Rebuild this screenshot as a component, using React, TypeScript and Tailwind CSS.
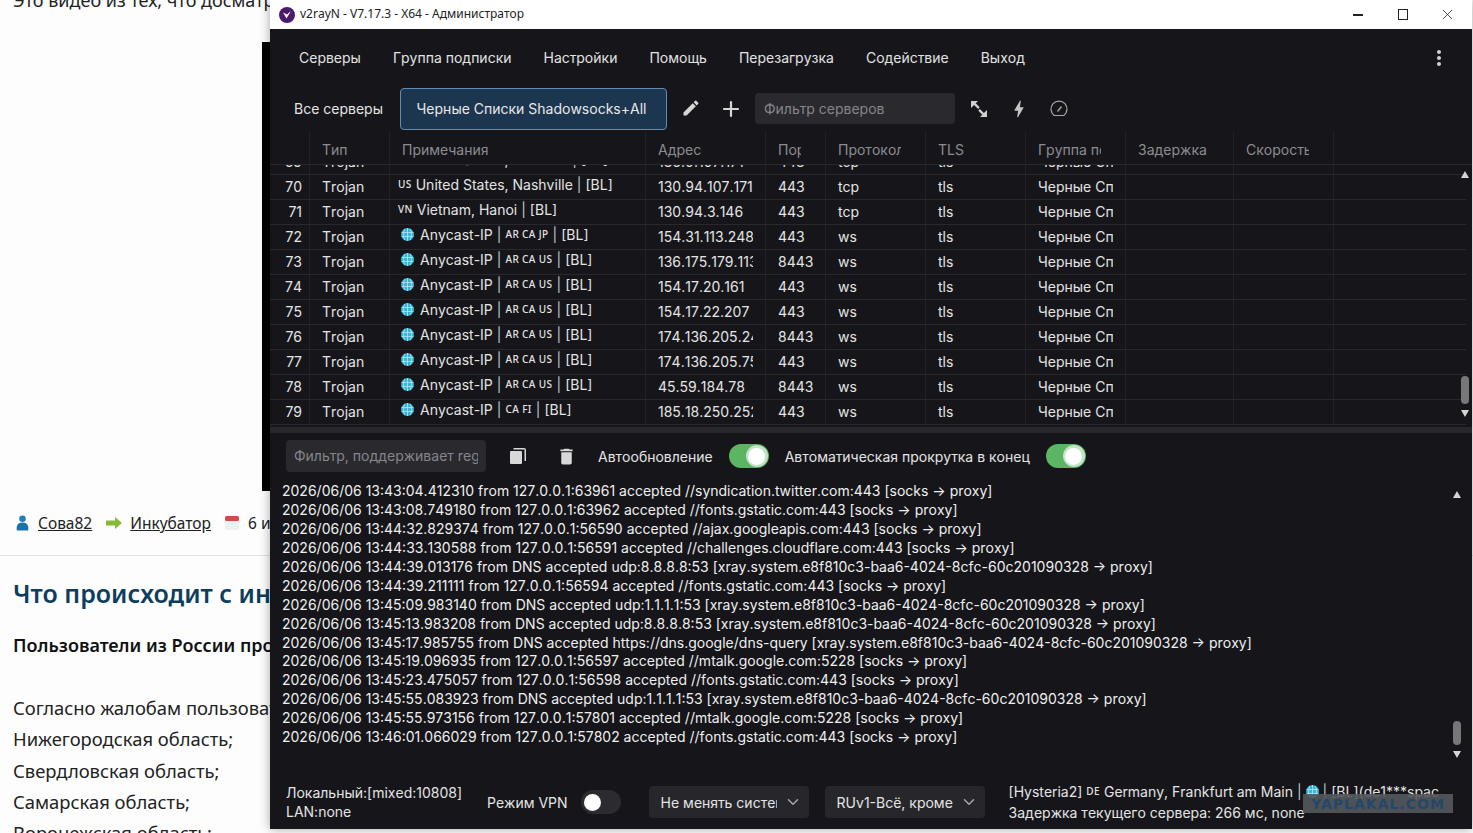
import React from "react";
import { ChevronDown, Plus, X } from "lucide-react";
import { MdBolt, MdDelete, MdEdit, MdMoreVert } from "react-icons/md";

const columns = "grid grid-cols-[40px_80px_256px_120px_60px_100px_100px_100px_108px_100px_1fr]";

const headers = ["", "Тип", "Примечания", "Адрес", "Порт", "Протокол", "TLS", "Группа подписки", "Задержка", "Скорость", ""];

type Row = { id: number; flag?: string; place?: string; tags?: string; address: string; port: string; network: string };

const rows: Row[] = [
  { id: 69, flag: "us", place: "United States, Ashburn", address: "136.0.107.171", port: "443", network: "tcp" },
  { id: 70, flag: "us", place: "United States, Nashville", address: "130.94.107.171", port: "443", network: "tcp" },
  { id: 71, flag: "vn", place: "Vietnam, Hanoi", address: "130.94.3.146", port: "443", network: "tcp" },
  { id: 72, tags: "AR CA JP", address: "154.31.113.248", port: "443", network: "ws" },
  { id: 73, tags: "AR CA US", address: "136.175.179.113", port: "8443", network: "ws" },
  { id: 74, tags: "AR CA US", address: "154.17.20.161", port: "443", network: "ws" },
  { id: 75, tags: "AR CA US", address: "154.17.22.207", port: "443", network: "ws" },
  { id: 76, tags: "AR CA US", address: "174.136.205.24", port: "8443", network: "ws" },
  { id: 77, tags: "AR CA US", address: "174.136.205.75", port: "443", network: "ws" },
  { id: 78, tags: "AR CA US", address: "45.59.184.78", port: "8443", network: "ws" },
  { id: 79, tags: "CA FI", address: "185.18.250.252", port: "443", network: "ws" },
];

const xray = "[xray.system.e8f810c3-baa6-4024-8cfc-60c201090328 → proxy]";

const logs = [
  "2026/06/06 13:43:04.412310 from 127.0.0.1:63961 accepted //syndication.twitter.com:443 [socks → proxy]",
  "2026/06/06 13:43:08.749180 from 127.0.0.1:63962 accepted //fonts.gstatic.com:443 [socks → proxy]",
  "2026/06/06 13:44:32.829374 from 127.0.0.1:56590 accepted //ajax.googleapis.com:443 [socks → proxy]",
  "2026/06/06 13:44:33.130588 from 127.0.0.1:56591 accepted //challenges.cloudflare.com:443 [socks → proxy]",
  `2026/06/06 13:44:39.013176 from DNS accepted udp:8.8.8.8:53 ${xray}`,
  "2026/06/06 13:44:39.211111 from 127.0.0.1:56594 accepted //fonts.gstatic.com:443 [socks → proxy]",
  `2026/06/06 13:45:09.983140 from DNS accepted udp:1.1.1.1:53 ${xray}`,
  `2026/06/06 13:45:13.983208 from DNS accepted udp:8.8.8.8:53 ${xray}`,
  `2026/06/06 13:45:17.985755 from DNS accepted https://dns.google/dns-query ${xray}`,
  "2026/06/06 13:45:19.096935 from 127.0.0.1:56597 accepted //mtalk.google.com:5228 [socks → proxy]",
  "2026/06/06 13:45:23.475057 from 127.0.0.1:56598 accepted //fonts.gstatic.com:443 [socks → proxy]",
  `2026/06/06 13:45:55.083923 from DNS accepted udp:1.1.1.1:53 ${xray}`,
  "2026/06/06 13:45:55.973156 from 127.0.0.1:57801 accepted //mtalk.google.com:5228 [socks → proxy]",
  "2026/06/06 13:46:01.066029 from 127.0.0.1:57802 accepted //fonts.gstatic.com:443 [socks → proxy]",
];

const menu = ["Серверы", "Группа подписки", "Настройки", "Помощь", "Перезагрузка", "Содействие", "Выход"];

const Globe = () => (
  <svg viewBox="0 0 12 12" className="h-[13px] w-[13px] shrink-0">
    <circle cx="6" cy="6" r="6" fill="#35b5d8" />
    <path d="M0.5 4.2h11M0.5 7.8h11M6 0v12M3.4 0.8c-1.4 3-1.4 7.4 0 10.4M8.6 0.8c1.4 3 1.4 7.4 0 10.4" stroke="#bfe9f5" strokeWidth="0.7" fill="none" />
  </svg>
);

const Flag = ({ children }: { children: React.ReactNode }) => (
  <span className="font-['Noto_Sans',sans-serif] text-[10px] font-medium uppercase tracking-[0.4px]">{children}</span>
);

const Bar = () => <span className="text-[#b9cbd8]">|</span>;

const Toggle = ({ on }: { on?: boolean }) =>
  on ? (
    <div className="flex h-6 w-10 shrink-0 items-center justify-end rounded-full bg-[#5cb563] pr-[1px]">
      <div className="flex h-[22px] w-[22px] items-center justify-center rounded-full bg-[#c5e3c7]">
        <div className="h-[17px] w-[17px] rounded-full bg-white" />
      </div>
    </div>
  ) : (
    <div className="flex h-6 w-10 shrink-0 items-center rounded-full bg-[#2c2c30] pl-[3px]">
      <div className="h-[17px] w-[17px] rounded-full bg-white" />
    </div>
  );

const Select = ({ label }: { label: string }) => (
  <div className="flex h-8 w-40 shrink-0 items-center rounded bg-[#27272b] pl-3 pr-[7px]">
    <span className="w-[116px] overflow-hidden whitespace-nowrap">{label}</span>
    <ChevronDown className="ml-auto h-[18px] w-[18px] text-[#a8a8ab]" strokeWidth={2} />
  </div>
);

const Scroller = ({ right, top, thumbTop, thumbHeight, bottom }: { right: string; top: string; thumbTop: string; thumbHeight: string; bottom: string }) => (
  <>
    <div className={`absolute h-0 w-0 border-x-[4px] border-b-[7px] border-x-transparent border-b-[#d5d5d5] ${right} ${top}`} />
    <div className={`absolute w-2 rounded-full bg-[#77777a] ${right} ${thumbTop} ${thumbHeight}`} />
    <div className={`absolute h-0 w-0 border-x-[4px] border-t-[7px] border-x-transparent border-t-[#d5d5d5] ${right} ${bottom}`} />
  </>
);

const ServerRow = ({ row }: { row: Row }) => (
  <div className={`${columns} h-[25px] border-b border-[#29292d] text-[14px] leading-[23px] text-[#e4e4e4]`}>
    <div className="border-r border-[#222226] pr-[7px] text-right">{row.id}</div>
    <div className="border-r border-[#222226] pl-3">Trojan</div>
    <div className="overflow-hidden whitespace-nowrap border-r border-[#222226] pb-[4px] pl-2 leading-[19px]">
      {row.flag ? (
        <span className="flex items-center gap-1">
          <Flag>{row.flag}</Flag> {row.place} <Bar /> [BL]
        </span>
      ) : (
        <span className="flex items-center gap-[4px] pl-[3px]">
          <Globe />
          <span className="ml-[2px]">Anycast-IP</span> <Bar />
          <Flag>{row.tags}</Flag> <Bar /> [BL]
        </span>
      )}
    </div>
    <div className="border-r border-[#222226] px-3">
      <div className="overflow-hidden whitespace-nowrap">{row.address}</div>
    </div>
    <div className="border-r border-[#222226] pl-3">{row.port}</div>
    <div className="border-r border-[#222226] pl-3">{row.network}</div>
    <div className="border-r border-[#222226] pl-3">tls</div>
    <div className="border-r border-[#222226] px-3">
      <div className="overflow-hidden whitespace-nowrap">Черные Списки Shadowsocks+All</div>
    </div>
    <div className="border-r border-[#222226]" />
    <div className="border-r border-[#222226]" />
    <div />
  </div>
);

const Article = () => (
  <div className="flex h-[833px] flex-col overflow-hidden bg-[#fdfdfd] font-['Noto_Sans',sans-serif] text-[#222]">
    <p className="-mt-[10px] pl-[13px] text-[18px] leading-[20px] whitespace-nowrap">Это видео из тех, что досматриваешь до конца</p>
    <div className="ml-[262px] mt-[32px] h-[449px] w-[40px] shrink-0 bg-black" />
    <div className="flex h-[65px] shrink-0 items-center gap-[6px] whitespace-nowrap border-b border-[#e2e2e2] pl-[15px] text-[15.500px] leading-[20px]">
      <svg viewBox="0 0 16 18" className="h-[18px] w-[15px] shrink-0">
        <circle cx="8" cy="4.5" r="3.5" fill="#1f7fb8" />
        <path d="M2 17c-1-5 1-8.500 6-8.500s7 3.500 6 8.500z" fill="#1a72a8" />
      </svg>
      <span className="ml-[2px] underline">Сова82</span>
      <svg viewBox="0 0 18 14" className="ml-[7px] h-[14px] w-[18px] shrink-0">
        <path d="M1 4.500h9V1l7 6-7 6V9.500H1z" fill="#8ab83f" />
      </svg>
      <span className="ml-[1px] underline">Инкубатор</span>
      <svg viewBox="0 0 16 16" className="ml-[7px] h-4 w-4 shrink-0">
        <rect x="1" y="1" width="14" height="14" rx="2" fill="#efefef" />
        <rect x="1" y="1" width="14" height="5" rx="1.500" fill="#cf4a4a" />
      </svg>
      <span className="ml-[2px]">6 июня 2026</span>
    </div>
    <h2 className="mt-[19px] pl-[13px] text-[25px] font-semibold leading-[36px] whitespace-nowrap text-[#0e3e5e]">Что происходит с интернетом</h2>
    <p className="mt-[22px] pl-[13px] text-[18px] font-semibold leading-[24px] whitespace-nowrap text-[#111]">Пользователи из России проводят</p>
    <div className="mt-[35px] flex flex-col pl-[13px] text-[18.400px] leading-[31.300px] whitespace-nowrap">
      <p>Согласно жалобам пользователей</p>
      <p>Нижегородская область;</p>
      <p>Свердловская область;</p>
      <p>Самарская область;</p>
      <p>Воронежская область;</p>
    </div>
  </div>
);

const AppWindow = () => (
  <div className="absolute left-[270px] top-0 flex h-[829px] w-[1202px] flex-col bg-[#16161a] font-['Inter',sans-serif] text-[14px] text-[#e4e4e4] shadow-[0_0_10px_rgba(0,0,0,0.35)] [font-kerning:none]">
    <div className="flex h-[29px] shrink-0 items-center bg-white pl-[9px] text-[#222]">
      <svg viewBox="0 0 16 16" className="h-4 w-4 shrink-0">
        <circle cx="8" cy="8" r="8" fill="#4b1a6b" />
        <path d="M4 5.500l3.500 6 4.500-7.500-4 3.500z" fill="#fff" />
      </svg>
      <span className="mb-[2px] ml-[5px] font-['Noto_Sans',sans-serif] text-[12px]">v2rayN - V7.17.3 - X64 - Администратор</span>
      <div className="ml-auto flex pr-[2px]">
        <div className="flex h-[29px] w-[45px] items-center justify-center"><div className="h-[2px] w-[10px] bg-[#222]" /></div>
        <div className="flex h-[29px] w-[45px] items-center justify-center"><div className="h-[11px] w-[10px] border border-[#222]" /></div>
        <div className="flex h-[29px] w-[45px] items-center justify-center"><X className="h-[17px] w-[17px]" strokeWidth={1.1} /></div>
      </div>
    </div>

    <div className="flex h-[59px] shrink-0 items-center pb-[2px] pl-[13px] pr-[21px] text-[#e2e2e2]">
      {menu.map((item) => (
        <span key={item} className="px-4">{item}</span>
      ))}
      <MdMoreVert className="ml-auto h-6 w-6 text-[#d0d0d0]" />
    </div>

    <div className="flex h-[45px] shrink-0 items-start pl-[24px]">
      <span className="mt-[10px] w-[106px]">Все серверы</span>
      <div className="flex h-[42px] w-[267px] items-center justify-center rounded border border-[#5f8db5] bg-[#1d3650] pb-[2px] pr-1 text-[#e8e8e8]">
        Черные Списки Shadowsocks+All
      </div>
      <MdEdit className="ml-[14px] mt-[10px] h-[20px] w-[20px] text-[#d6d6d6]" />
      <Plus className="ml-[18px] mt-[9px] h-[24px] w-[24px] text-[#d6d6d6]" strokeWidth={2.2} />
      <div className="ml-3 mt-[5px] flex h-[31px] w-[200px] items-center rounded bg-[#2a2a2e] pl-[9px] text-[#85858a]">Фильтр серверов</div>
      <svg viewBox="0 0 20 20" className="ml-[14px] mt-[11px] h-5 w-5 text-[#d0d0d0]" fill="currentColor">
        <path d="M2 2h7L6.700 4.300l4 4-1.600 1.600-4-4L2.800 8.200 2 9zM18 18h-7l2.300-2.300-4-4 1.600-1.600 4 4 2.300-2.300.800-.800z" />
      </svg>
      <MdBolt className="ml-[19px] mt-[10px] h-[22px] w-[22px] text-[#c4c4c4]" />
      <svg viewBox="0 0 20 20" className="ml-[19px] mt-[11px] h-5 w-5 text-[#a8a8a8]" fill="none" stroke="currentColor" strokeWidth="1.200">
        <path d="M5.200 16.500a8 8 0 1 1 9.600 0z" />
        <path d="M8.500 12.500l4-5" strokeWidth="1.400" />
      </svg>
    </div>

    <div className={`${columns} mt-[-1px] h-[33px] shrink-0 border-b border-[#29292d] leading-[36px] text-[#8c8c90]`}>
      {headers.map((title, i) => (
        <div key={i} className={i === 10 ? "" : "border-r border-[#222226] pl-3 pr-6"}>
          <div className="overflow-hidden whitespace-nowrap">{title}</div>
        </div>
      ))}
    </div>

    <div className="relative h-[260px] shrink-0 overflow-hidden">
      <div className="-mt-[15px] pr-[6px]">
        {rows.map((row) => (
          <ServerRow key={row.id} row={row} />
        ))}
      </div>
      <Scroller right="right-[3px]" top="top-[6px]" thumbTop="top-[211px]" thumbHeight="h-[28px]" bottom="top-[245px]" />
    </div>

    <div className="mt-[2px] h-[6px] shrink-0 bg-[#28282c]" />

    <div className="relative flex min-h-0 flex-1 flex-col">
      <div className="flex h-[46px] shrink-0 items-center pl-[16px]">
        <div className="h-8 w-[200px] rounded bg-[#2a2a2e] px-2 leading-8 text-[#85858a]">
          <div className="overflow-hidden whitespace-nowrap">Фильтр, поддерживает regex</div>
        </div>
        <svg viewBox="0 0 18 18" className="ml-[23px] h-[18px] w-[18px] text-[#d8d8d8]" fill="currentColor">
          <rect x="1" y="4" width="12" height="13" rx="1" />
          <path d="M4.500 1H15a2 2 0 0 1 2 2v11h-1.500V2.500h-11z" />
        </svg>
        <MdDelete className="ml-[29px] h-[21px] w-[21px] text-[#d8d8d8]" />
        <span className="ml-[21px]">Автообновление</span>
        <div className="ml-4"><Toggle on /></div>
        <span className="ml-4">Автоматическая прокрутка в конец</span>
        <div className="ml-4"><Toggle on /></div>
      </div>
      <div className="flex flex-col whitespace-nowrap pl-3 pt-[3px] text-[14px] leading-[18.930px] text-[#efefef]">
        {logs.map((line) => (
          <div key={line}>{line}</div>
        ))}
      </div>
      <Scroller right="right-[11px]" top="top-[58px]" thumbTop="top-[288px]" thumbHeight="h-[24px]" bottom="top-[318px]" />
    </div>

    <div className="flex h-[54px] shrink-0 items-center pl-[16px]">
      <div className="w-[201px] shrink-0 leading-[19px]">
        <div>Локальный:[mixed:10808]</div>
        <div>LAN:none</div>
      </div>
      <span className="shrink-0">Режим VPN</span>
      <div className="ml-[13px]"><Toggle /></div>
      <div className="ml-7"><Select label="Не менять системный" /></div>
      <div className="ml-4"><Select label="RUv1-Всё, кроме" /></div>
      <div className="ml-6 w-[430px] overflow-hidden whitespace-nowrap leading-[21px]">
        <div className="flex items-center gap-1">
          [Hysteria2] <Flag>de</Flag> Germany, Frankfurt am Main <Bar /> <Globe /> <Bar /> [BL](de1***space)
        </div>
        <div>Задержка текущего сервера: 266 мс, none</div>
      </div>
    </div>
  </div>
);

const App = () => {
  return (
    <div className="relative h-[833px] w-[1473px] overflow-hidden bg-[#dcdcdc]">
      <Article />
      <AppWindow />
      <div className="absolute left-[1303px] top-[794px] flex h-[19px] w-[150px] items-center justify-center bg-[#54585c]/90 font-['DejaVu_Sans',sans-serif] text-[14px] font-bold leading-none tracking-[1px] text-[#23486a]">
        YAPLAKAL.COM
      </div>
    </div>
  );
};

export default App;
